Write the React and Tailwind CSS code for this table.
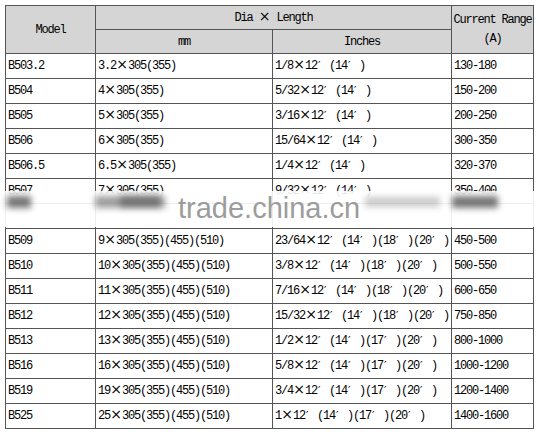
import React from "react";

const rows = [
  ["B503.2", "3.2×305(355)", "1/8×12′(14′)", "130-180"],
  ["B504", "4×305(355)", "5/32×12′(14′)", "150-200"],
  ["B505", "5×305(355)", "3/16×12′(14′)", "200-250"],
  ["B506", "6×305(355)", "15/64×12′(14′)", "300-350"],
  ["B506.5", "6.5×305(355)", "1/4×12′(14′)", "320-370"],
  ["B507", "7×305(355)", "9/32×12′(14′)", "350-400"],
  ["", "", "", ""],
  ["B509", "9×305(355)(455)(510)", "23/64×12′(14′)(18′)(20′)", "450-500"],
  ["B510", "10×305(355)(455)(510)", "3/8×12′(14′)(18′)(20′)", "500-550"],
  ["B511", "11×305(355)(455)(510)", "7/16×12′(14′)(18′)(20′)", "600-650"],
  ["B512", "12×305(355)(455)(510)", "15/32×12′(14′)(18′)(20′)", "750-850"],
  ["B513", "13×305(355)(455)(510)", "1/2×12′(14′)(17′)(20′)", "800-1000"],
  ["B516", "16×305(355)(455)(510)", "5/8×12′(14′)(17′)(20′)", "1000-1200"],
  ["B519", "19×305(355)(455)(510)", "3/4×12′(14′)(17′)(20′)", "1200-1400"],
  ["B525", "25×305(355)(455)(510)", "1×12′(14′)(17′)(20′)", "1400-1600"],
];

function T({ s }) {
  const parts = [];
  let buf = "";
  let k = 0;
  for (const ch of s) {
    if (ch === "×" || ch === "′") {
      if (buf) parts.push(<span key={k++}>{buf}</span>);
      buf = "";
      if (ch === "×") {
        parts.push(
          <span key={k++} className="inline-block w-[12px] text-center text-[14px] tracking-normal font-['DejaVu_Sans',sans-serif] leading-none">
            ×
          </span>
        );
      } else {
        parts.push(
          <span key={k++} className="inline-block w-[12px] text-left pl-[1px] tracking-normal font-['DejaVu_Sans',sans-serif] text-[11px] leading-none">
            ′
          </span>
        );
      }
    } else {
      buf += ch;
    }
  }
  if (buf) parts.push(<span key={k++}>{buf}</span>);
  return <span className="whitespace-pre">{parts}</span>;
}

const cell = "border border-[#555] px-[2px] align-middle text-left overflow-hidden whitespace-nowrap";
const head = "border border-[#555] bg-[#d5d5d5] text-center align-middle font-normal";

export default function App() {
  return (
    <div className="relative w-[537px] h-[432px] bg-white overflow-hidden text-black font-['Liberation_Mono',monospace] text-[12px] tracking-[-1.2px]">
      <div className="pl-[5px] pt-[5px]">
        <table className="border-collapse table-fixed w-[528px]">
          <colgroup>
            <col className="w-[90px]" />
            <col className="w-[177px]" />
            <col className="w-[179px]" />
            <col className="w-[82px]" />
          </colgroup>
          <thead>
            <tr className="h-[24px]">
              <th rowSpan={2} className={head}>Model</th>
              <th colSpan={2} className={head}>
                <T s="Dia × Length" />
              </th>
              <th rowSpan={2} className={head + " leading-[19px]"}>
                Current Range
                <br />
                (A)
              </th>
            </tr>
            <tr className="h-[24px]">
              <th className={head}>mm</th>
              <th className={head}>Inches</th>
            </tr>
          </thead>
          <tbody>
            {rows.map((r, i) => (
              <tr key={i} className="h-[25px]">
                <td className={cell}>{r[0]}</td>
                <td className={cell}>
                  <T s={r[1]} />
                </td>
                <td className={cell}>
                  <T s={r[2]} />
                </td>
                <td className={cell}>{r[3]}</td>
              </tr>
            ))}
          </tbody>
        </table>
      </div>

      {/* watermark overlay */}
      <div className="absolute left-0 right-0 top-[191px] h-[36px] bg-white/[0.9]" />
      <div className="absolute left-[7px] top-[196px] w-[24px] h-[12px] bg-[#555] blur-[3px] opacity-80" />
      <div className="absolute left-[95px] top-[196px] w-[70px] h-[12px] bg-[#777] blur-[3px] opacity-70" />
      <div className="absolute left-[120px] top-[196px] w-[40px] h-[11px] bg-[#555] blur-[3px] opacity-60" />
      <div className="absolute left-[365px] top-[197px] w-[75px] h-[10px] bg-[#999] blur-[3px] opacity-50" />
      <div className="absolute left-[452px] top-[196px] w-[46px] h-[12px] bg-[#555] blur-[3px] opacity-80" />
      <div className="absolute left-[178px] top-[194px] text-[29px] leading-[29px] tracking-normal text-[#9c9c9c] font-['Liberation_Sans',Arial,sans-serif] whitespace-nowrap">
        trade.china.cn
      </div>
    </div>
  );
}
